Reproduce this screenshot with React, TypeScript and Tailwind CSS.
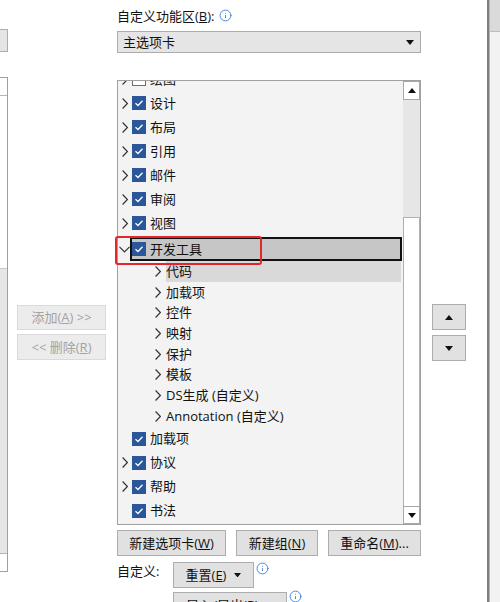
import { Info } from "lucide-react";

const font = "font-['Open_Sans','Noto_Sans_CJK_SC',sans-serif]";

function Chevron({ open = false }: { open?: boolean }) {
  if (open) {
    return (
      <svg width="11" height="7" viewBox="0 0 11 7">
        <polyline points="0.5,0.8 5.5,5.8 10.5,0.8" fill="none" stroke="#333" strokeWidth="1.2" />
      </svg>
    );
  }
  return (
    <svg width="6" height="11" viewBox="0 0 6 11">
      <polyline points="0.6,0.5 5.4,5.5 0.6,10.5" fill="none" stroke="#333" strokeWidth="1.2" />
    </svg>
  );
}

function Check({ on = true }: { on?: boolean }) {
  if (!on) {
    return <div className="h-[14px] w-[14px] shrink-0 border border-[#6e6e6e] bg-white" />;
  }
  return (
    <svg width="14" height="14" viewBox="0 0 14 14" className="shrink-0">
      <rect x="0" y="0" width="14" height="14" fill="#2b579a" />
      <polyline points="3.5,7.2 6,9.5 10.5,4.8" fill="none" stroke="#fff" strokeWidth="1.3" />
    </svg>
  );
}

function Tri({ up = false, size = 8 }: { up?: boolean; size?: number }) {
  return (
    <svg width={size} height={size / 2 + 1} viewBox="0 0 8 5">
      {up ? <polygon points="0,5 8,5 4,0" fill="#111" /> : <polygon points="0,0 8,0 4,5" fill="#111" />}
    </svg>
  );
}

function TopRow({ label, chevron = true, on = true }: { label: string; chevron?: boolean; on?: boolean }) {
  return (
    <div className="flex h-[24px] items-center">
      <div className="flex w-[14px] shrink-0 justify-center">{chevron && <Chevron />}</div>
      <Check on={on} />
      <span className="ml-[4px] leading-none">{label}</span>
    </div>
  );
}

function ChildRow({ label, active = false }: { label: string; active?: boolean }) {
  return (
    <div className="flex h-[20.7px] items-center pl-[37px]">
      <Chevron />
      <span className={`ml-[5px] mr-[2px] flex h-full flex-1 items-center leading-none ${active ? "bg-[#d9d9d9]" : ""}`}>
        {label}
      </span>
    </div>
  );
}

function Btn({ children, className = "" }: { children: React.ReactNode; className?: string }) {
  return (
    <div className={`flex h-[26px] shrink-0 items-center justify-center border border-[#adadad] bg-[#e1e1e1] leading-none ${className}`}>
      {children}
    </div>
  );
}

export default function App() {
  return (
    <div className={`flex h-[602px] w-[500px] overflow-hidden bg-white text-[13px] text-[#111] ${font}`}>
      {/* left panel stub */}
      <div className="flex w-[8px] shrink-0 flex-col pt-[29px]">
        <div className="h-[23px] shrink-0 border-y border-r border-[#adadad] bg-[#e5e5e5]" />
        <div className="mt-[25px] flex h-[495px] shrink-0 flex-col border-y border-r border-[#a0a0a0] bg-white">
          <div className="h-[18px] border-b border-[#b5b5b5] bg-white" />
          <div className="h-[172px] bg-white" />
          <div className="flex-1 border-t border-[#c8c8c8] bg-[#e6e6e6]" />
          <div className="h-[18px] border-t border-[#b5b5b5] bg-white" />
        </div>
      </div>

      {/* add / remove */}
      <div className="flex w-[109px] shrink-0 flex-col gap-[4px] pl-[9px] pt-[305px] text-[#a3a3a3]">
        <div className="flex h-[25px] w-[89px] items-center justify-center border border-[#dadada] bg-[#ececec] leading-none">
          添加(<span className="underline">A</span>)&nbsp;&gt;&gt;
        </div>
        <div className="flex h-[26px] w-[89px] items-center justify-center border border-[#dadada] bg-[#ececec] leading-none">
          &lt;&lt;&nbsp;删除(<span className="underline">R</span>)
        </div>
      </div>

      {/* main column */}
      <div className="flex w-[304px] shrink-0 flex-col pt-[7px]">
        <div className="flex h-[18px] shrink-0 items-center gap-[4px]">
          <span className="leading-none">
            自定义功能区(<span className="underline">B</span>):
          </span>
          <Info size={13} color="#2b7bd6" strokeWidth={1.6} className="-mt-[2px]" />
        </div>

        <div className="mt-[6px] flex h-[22px] shrink-0 items-center justify-between border border-[#acacac] bg-[#e5e5e5] pl-[5px] pr-[6px]">
          <span className="leading-none">主选项卡</span>
          <Tri />
        </div>

        <div className="relative mt-[27px] flex h-[445px] shrink-0 border border-[#a0a0a0] bg-[#f3f3f3]">
          <div className="flex-1 overflow-hidden">
            <div className="-mt-[14px]">
              <TopRow label="绘图" on={false} />
              <TopRow label="设计" />
              <TopRow label="布局" />
              <TopRow label="引用" />
              <TopRow label="邮件" />
              <TopRow label="审阅" />
              <TopRow label="视图" />
              <div className="flex h-[26px] items-end">
                <div className="flex h-[24px] w-[12px] shrink-0 items-center justify-center">
                  <Chevron open />
                </div>
                <div className="mr-[1px] flex h-[24px] flex-1 items-center border-2 border-[#111] bg-[#c6c6c6]">
                  <Check />
                  <span className="ml-[4px] leading-none">开发工具</span>
                </div>
              </div>
              <ChildRow label="代码" active />
              <ChildRow label="加载项" />
              <ChildRow label="控件" />
              <ChildRow label="映射" />
              <ChildRow label="保护" />
              <ChildRow label="模板" />
              <ChildRow label="DS生成 (自定义)" />
              <ChildRow label="Annotation (自定义)" />
              <TopRow label="加载项" chevron={false} />
              <TopRow label="协议" />
              <TopRow label="帮助" />
              <TopRow label="书法" chevron={false} />
            </div>
          </div>

          {/* scrollbar */}
          <div className="flex w-[17px] shrink-0 flex-col">
            <div className="flex h-[19px] shrink-0 items-center justify-center border border-[#a8a8a8] bg-white">
              <Tri up />
            </div>
            <div className="h-[117px] shrink-0 bg-[#e6e6e6]" />
            <div className="flex-1 border-x border-t border-[#b0b0b0] bg-white" />
            <div className="flex h-[18px] shrink-0 items-center justify-center border border-[#a8a8a8] bg-white">
              <Tri />
            </div>
          </div>

          {/* annotation */}
          <div className="absolute left-[-3px] top-[155px] h-[29px] w-[147px] rounded-[3px] border-[2.5px] border-[#e3262b]" />
        </div>

        <div className="mt-[5px] flex shrink-0 gap-[10px]">
          <Btn className="w-[109px]">
            新建选项卡(<span className="underline">W</span>)
          </Btn>
          <Btn className="w-[82px]">
            新建组(<span className="underline">N</span>)
          </Btn>
          <Btn className="w-[93px]">
            重命名(<span className="underline">M</span>)...
          </Btn>
        </div>

        <div className="mt-[6px] flex shrink-0 items-start">
          <span className="w-[56px] pt-[3px] leading-none">自定义:</span>
          <Btn className="w-[81px] gap-[8px]">
            <span>
              重置(<span className="underline">E</span>)
            </span>
            <Tri size={7} />
          </Btn>
          <Info size={13} color="#2b7bd6" strokeWidth={1.6} className="ml-[2px]" />
        </div>

        <div className="mt-[4px] flex shrink-0 items-start pl-[56px]">
          <Btn className="w-[114px] gap-[8px]">
            <span>
              导入/导出(<span className="underline">P</span>)
            </span>
            <Tri size={7} />
          </Btn>
          <Info size={13} color="#2b7bd6" strokeWidth={1.6} className="-mt-[2px] ml-[2px]" />
        </div>
      </div>

      {/* move up / down */}
      <div className="flex w-[66px] shrink-0 flex-col gap-[5px] pl-[11px] pt-[304px]">
        <Btn className="w-[34px]">
          <Tri up />
        </Btn>
        <Btn className="w-[34px]">
          <Tri />
        </Btn>
      </div>

      {/* window edge */}
      <div className="w-[3px] shrink-0 border-r border-[#b5b5b5] bg-[#7f7f7f]" />
      <div className="flex flex-1 flex-col bg-[#f2f2f2]">
        <div className="h-[32px] border-b border-[#bdbdbd] bg-[#dadada]" />
      </div>
    </div>
  );
}
